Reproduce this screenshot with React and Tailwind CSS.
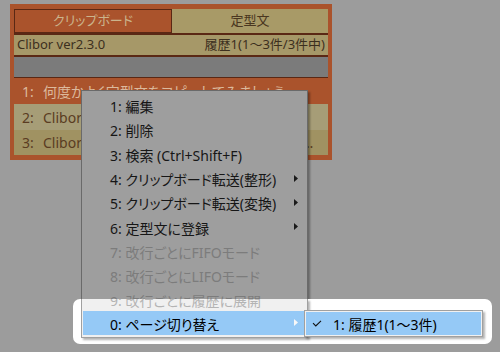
import React from 'react';

const MENU = [
  { t: '1: 編集' },
  { t: '2: 削除' },
  { t: '3: 検索 (Ctrl+Shift+F)' },
  { t: '4: クリップボード転送(整形)', sub: true },
  { t: '5: クリップボード転送(変換)', sub: true },
  { t: '6: 定型文に登録', sub: true },
  { t: '7: 改行ごとにFIFOモード', dis: true },
  { t: '8: 改行ごとにLIFOモード', dis: true },
  { t: '9: 改行ごとに履歴に展開', dis: true },
  { t: '0: ページ切り替え', sub: true, sel: true },
];

function Arrow({ color }) {
  return (
    <svg width="4" height="7" viewBox="0 0 4 7" className="shrink-0">
      <path d="M0 0 L4 3.5 L0 7 Z" fill={color} />
    </svg>
  );
}

function Item({ item, lit }) {
  let text = lit ? 'text-black' : 'text-[#161616]';
  if (item.dis) text = lit ? 'text-[#b4b4b4]' : 'text-[#7c7c7c]';
  let bg = '';
  if (item.sel) bg = lit ? 'bg-[#95c9f6]' : 'bg-[#5a7a95]';
  return (
    <div className={`flex items-center h-[24.3px] pl-[27px] pr-[8px] mx-[1px] ${bg}`}>
      <span className={`text-[14px] leading-none pt-[4px] ${text}`}>{item.t}</span>
      {item.sub && (
        <span className="ml-auto">
          <Arrow color={item.sel ? (lit ? '#f8f8f8' : '#9a9a9a') : '#1a1a1a'} />
        </span>
      )}
    </div>
  );
}

export default function App() {
  return (
    <div className="relative w-[500px] h-[352px] overflow-hidden bg-[#9c9c9c] [font-family:'Noto_Sans','Noto_Sans_CJK_JP',sans-serif] [font-feature-settings:'palt']">
      {/* Clibor window */}
      <div className="pt-[4px] pl-[10px]">
        <div className="w-[322px] bg-[#aa532c] px-[4px] pt-[5px] pb-[5px] flex flex-col">
          <div className="flex h-[24px]">
            <div className="w-[158px] border border-[#5a2814] flex items-center justify-center text-[13px] text-[#cbb48c]">
              クリップボード
            </div>
            <div className="flex-1 bg-[#a89a67] flex items-center justify-center text-[13px] text-[#4a3620]">
              定型文
            </div>
          </div>
          <div className="h-[2px] bg-[#5a2814]" />
          <div className="h-[20px] bg-[#a69868] flex items-center justify-between px-[3px] text-[13px] text-[#3c2f1e]">
            <span>Clibor ver2.3.0</span>
            <span>履歴1(1〜3件/3件中)</span>
          </div>
          <div className="h-[2px] bg-[#5a2814]" />
          <div className="h-[20px] bg-[#7b7b7b]" />
          <div className="h-[1px] bg-[#5a2814]" />
          <div className="h-[26px] flex items-center pl-[8px] pr-[14px] text-[14px] text-[#dcb99c] min-w-0">
            <span className="w-[21px] shrink-0">1:</span>
            <span className="truncate">何度かよく定型文をコピーしてみましょう</span>
          </div>
          <div className="h-[26px] bg-[#a69d77] flex items-center pl-[8px] pr-[14px] text-[14px] text-[#5a3c22] min-w-0">
            <span className="w-[21px] shrink-0">2:</span>
            <span className="truncate">Clibor をご利用いただきありがとうございます。</span>
          </div>
          <div className="h-[25px] bg-[#a09262] flex items-center pl-[8px] pr-[14px] text-[14px] text-[#5a3c22] min-w-0">
            <span className="w-[21px] shrink-0">3:</span>
            <span className="truncate">Clibor は無料のクリップボード履歴ソフトです。</span>
          </div>
        </div>
      </div>

      {/* Context menu (dimmed) */}
      <div className="absolute left-[81px] top-[90px] w-[227px] bg-[#9e9e9e] border border-[#6a6a6a] pt-[2px] pb-[1px] shadow-[2px_2px_2px_rgba(0,0,0,0.35)]">
        {MENU.map((m) => (
          <Item key={m.t} item={m} lit={false} />
        ))}
      </div>

      {/* Spotlight highlight */}
      <div className="absolute left-[73px] top-[299px] w-[419px] h-[45px] rounded-[7px] bg-white overflow-hidden flex items-start pl-[8px]">
        <div className="w-[227px] h-[39px] shrink-0 bg-[#f0f0f0] border-x border-b border-[#a0a0a0] overflow-hidden shadow-[2px_2px_2px_rgba(0,0,0,0.3)]">
          <div className="mt-[-12.6px]">
            <Item item={MENU[8]} lit />
            <Item item={MENU[9]} lit />
          </div>
        </div>
        <div className="ml-[-4px] mt-[11px] w-[179px] h-[27px] shrink-0 bg-[#f0f0f0] border border-[#a0a0a0] p-[1px] shadow-[2px_2px_2px_rgba(0,0,0,0.3)]">
          <div className="h-full bg-[#95c9f6] flex items-center pl-[6px]">
            <svg width="10" height="7" viewBox="0 0 10 7" className="shrink-0">
              <polyline points="1,3.2 3.8,6 9,0.8" fill="none" stroke="#111" strokeWidth="1.1" />
            </svg>
            <span className="ml-[11px] text-[14px] leading-none pt-[3px] text-black">1: 履歴1(1〜3件)</span>
          </div>
        </div>
      </div>
    </div>
  );
}
